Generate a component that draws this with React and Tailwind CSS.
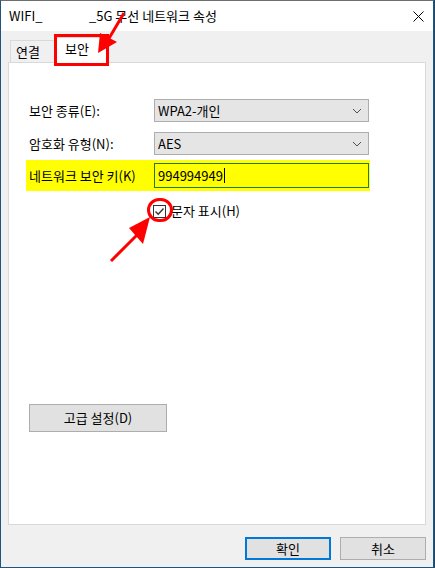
import React from "react";

const font = { fontFamily: '"Noto Sans CJK KR", "Noto Sans", sans-serif' };

function Combo({ value }) {
  return (
    <div className="w-[215px] h-[23px] bg-[#e5e5e5] border border-[#adadad] flex items-center justify-between pl-[3px] pr-[6px]">
      <span className="text-[13px] text-black">{value}</span>
      <svg width="10" height="6" viewBox="0 0 10 6">
        <path d="M1 1 L5 5 L9 1" fill="none" stroke="#505050" strokeWidth="1" />
      </svg>
    </div>
  );
}

function Button({ label, primary, className }) {
  return (
    <div
      className={
        "h-[23px] bg-[#e1e1e1] flex items-center justify-center text-[13px] text-black " +
        (primary ? "border-2 border-[#0078d7] " : "border border-[#adadad] ") +
        (className || "")
      }
    >
      {label}
    </div>
  );
}

export default function App() {
  return (
    <div className="w-[435px] h-[568px] bg-[#1d4a6c] relative overflow-hidden" style={font}>
      <div className="w-[434px] h-[568px] flex flex-col border-l border-r border-b border-t border-[#23527a] border-t-[#6e6e6e] bg-[#f0f0f0]">
        {/* title bar */}
        <div className="h-[30px] bg-white flex items-center justify-between pl-[8px] pr-[9px] shrink-0">
          <div className="text-[13px] text-black whitespace-nowrap">
            <span className="inline-block w-[80px]">WIFI_</span>
            <span>_5G 무선 네트워크 속성</span>
          </div>
          <svg width="11" height="11" viewBox="0 0 11 11">
            <path d="M0.5 0.5 L10.5 10.5 M10.5 0.5 L0.5 10.5" stroke="#000" strokeWidth="1" />
          </svg>
        </div>

        {/* body */}
        <div className="flex-1 flex flex-col px-[7px]">
          {/* tabs */}
          <div className="flex items-end h-[31px] pl-[2px] relative z-10">
            <div className="h-[22px] w-[45px] bg-[#f0f0f0] border border-b-0 border-[#d9d9d9] flex items-center pl-[5px] text-[13px] text-black">
              연결
            </div>
            <div className="h-[26px] w-[53px] bg-white border border-b-0 border-[#d9d9d9] -mb-px flex items-start pt-[1px] pl-[9px] text-[13px] text-black">
              보안
            </div>
          </div>

          {/* panel */}
          <div className="h-[463px] bg-white border border-[#d9d9d9] flex flex-col pl-[20px] pt-[36px]">
            <div className="flex items-center h-[23px]">
              <span className="w-[125px] text-[13px] text-black">보안 종류(E):</span>
              <Combo value="WPA2-개인" />
            </div>
            <div className="flex items-center h-[23px] mt-[10px]">
              <span className="w-[125px] text-[13px] text-black">암호화 유형(N):</span>
              <Combo value="AES" />
            </div>
            <div className="flex items-center h-[31px] mt-[5px] -ml-[3px] pl-[3px] w-[344px] bg-[#ffff00]">
              <span className="w-[125px] text-[13px] text-black">네트워크 보안 키(K)</span>
              <div className="w-[215px] h-[25px] border border-[#1f7a2a] flex items-center pl-[3px] text-[13px] text-black">
                994994949
                <span className="inline-block w-px h-[15px] bg-black ml-px" />
              </div>
            </div>
            <div className="flex items-center mt-[13px] ml-[124px] h-[14px]">
              <div className="w-[13px] h-[13px] border border-[#333] bg-white flex items-center justify-center">
                <svg width="11" height="11" viewBox="0 0 11 11">
                  <path d="M1.5 5.5 L4.2 8.2 L9.5 2.5" fill="none" stroke="#333" strokeWidth="1.4" />
                </svg>
              </div>
              <span className="ml-[5px] text-[13px] text-black">문자 표시(H)</span>
            </div>
            <Button label="고급 설정(D)" className="w-[138px] h-[28px] mt-[186px]" />
          </div>

          {/* footer */}
          <div className="flex justify-end gap-[9px] mt-[12px]">
            <Button label="확인" primary className="w-[86px]" />
            <Button label="취소" className="w-[86px]" />
          </div>
        </div>
      </div>

      {/* annotations */}
      <div className="absolute left-[54px] top-[34px] w-[55px] h-[32px] border-[3px] border-[#ff0000] z-20" />
      <div className="absolute left-[147px] top-[198px] w-[26px] h-[24px] border-[3px] border-[#ff0000] rounded-full z-20" />
      <svg className="absolute left-0 top-0 z-30 pointer-events-none" width="435" height="568">
        <line x1="124" y1="13" x2="108" y2="40" stroke="#ff0000" strokeWidth="3" />
        <polygon points="98,53 100,33 117,42" fill="#ff0000" />
        <line x1="111" y1="261" x2="137" y2="235" stroke="#ff0000" strokeWidth="3" />
        <polygon points="150,217 129,228 143,244" fill="#ff0000" />
      </svg>
    </div>
  );
}
